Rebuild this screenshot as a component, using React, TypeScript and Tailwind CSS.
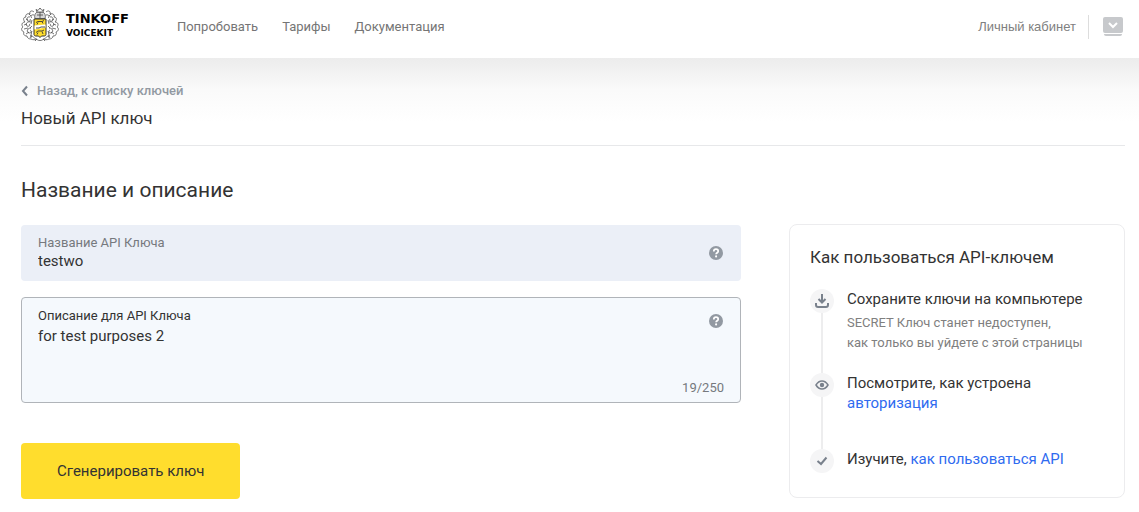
import { useState } from "react";
import type { ReactNode } from "react";

const NAV = [
  { label: "Попробовать", href: "#try" },
  { label: "Тарифы", href: "#pricing" },
  { label: "Документация", href: "#docs" },
];

const MAX_DESCRIPTION = 250;

function Crest() {
  return (
    <svg width="38" height="34" viewBox="0 0 38 34" fill="none" aria-hidden="true">
      {/* mantling */}
      <g stroke="#3c3c3c" strokeWidth=".7">
        <path d="M13 4c-2-2-5-1-4 2-3-1-5 1-4 3-3 0-3 3-1 5-3 0-4 3-2 5-2 1-2 4 1 5-1 2 0 4 3 4 0 2 2 3 4 3 2 1 4 1 6 0" />
        <path d="M25 4c2-2 5-1 4 2 3-1 5 1 4 3 3 0 3 3 1 5 3 0 4 3 2 5 2 1 2 4-1 5 1 2 0 4-3 4 0 2-2 3-4 3-2 1-4 1-6 0" />
        <path d="M13 7c-3-1-4 2-2 3M9 9c-3-1-4 3-2 4 2 1 3-1 2-2M10 14c-4-1-6 2-4 4 2 1 4-1 2-2M10 20c-4 0-5 4-2 5 2 0 3-2 1-3M11 26c-2 0-2 3 0 3M5 11l2 1M3 17l3-1M3 21l4-1M5 26l3-2M8 6l2 2M9 30l2-3M11 12l-1 4M11 18l-2 2M11 23l-1 3" />
        <path d="M25 7c3-1 4 2 2 3M29 9c3-1 4 3 2 4-2 1-3-1-2-2M28 14c4-1 6 2 4 4-2 1-4-1-2-2M28 20c4 0 5 4 2 5-2 0-3-2-1-3M27 26c2 0 2 3 0 3M33 11l-2 1M35 17l-3-1M35 21l-4-1M33 26l-3-2M30 6l-2 2M29 30l-2-3M27 12l1 4M27 18l2 2M27 23l1 3" />
      </g>
      {/* crown and helmet */}
      <path d="M14 10.500c-1-3 0-5 2-6.500h6c2 1.500 3 3.500 2 6.500z" fill="#d8d8d8" stroke="#555555" strokeWidth=".8" />
      <path d="M16 4l-1-2.500 2 1 2-2.500 2 2.500 2-1-1 2.500zM19 4v6M16 7h6" stroke="#444444" strokeWidth=".8" fill="#ffffff" />
      {/* shield */}
      <path d="M13 11h12v15.500c0 1-1 1.500-2 1.500h-2.500L19 29.500 17.500 28H15c-1 0-2-.5-2-1.500z" fill="#ffdd2d" stroke="#333333" />
      <path d="M13.500 17.500l11-1v3l-11 2z" fill="#ffffff" />
      <path d="M15 14.500l2-1h4l2-1M16 16.500l1-2M22 15.500l-1-2M15 20h3l2-1h4M15 24.500l2-1.500h4l2-1M16 26.500l1-2M22 26l-1-2.500" stroke="#3a3a3a" strokeWidth=".9" />
      {/* ribbon */}
      <path d="M10 28c2 0 3 2 5 3s2 1.500 4 1.500 2-.5 4-1.500 3-3 5-3M14 33l2-2M24 33l-2-2" stroke="#555555" strokeWidth=".8" />
    </svg>
  );
}

function HelpIcon({ className }: { className: string }) {
  return (
    <button type="button" aria-label="Подсказка" className={className}>
      <svg width="16" height="16" viewBox="0 0 16 16" fill="none">
        <circle cx="8" cy="8" r="7" fill="#9299a2" />
        <path d="M5.800 6.400c0-1.300.9-2.200 2.200-2.200s2.200.8 2.200 2c0 1.500-2.100 1.500-2.100 3.100" stroke="#fff" strokeWidth="1.700" />
        <circle cx="8.100" cy="11.400" r="1.050" fill="#fff" />
      </svg>
    </button>
  );
}

function Step({ icon, last, children }: { icon: ReactNode; last?: boolean; children: ReactNode }) {
  return (
    <li className="flex gap-[13px]">
      <div className="flex w-6 flex-col items-center">
        <span className="flex size-6 shrink-0 items-center justify-center rounded-full bg-[#f5f5f6] text-[#79818c]">
          {icon}
        </span>
        {!last && <span className="w-0.5 grow bg-[#ededee]" />}
      </div>
      <div>{children}</div>
    </li>
  );
}

export default function App() {
  const [name, setName] = useState("testwo");
  const [description, setDescription] = useState("for test purposes 2");

  return (
    <div className="bg-white font-['Roboto','Liberation_Sans',sans-serif] text-[#333333]">
      <header className="flex h-[58px] items-center justify-between pb-1 pl-[21px] pr-4">
        <div className="flex items-center">
          <a href="#home" className="flex items-center gap-[7px] pb-1 font-['DejaVu_Sans',sans-serif] font-bold text-black">
            <Crest />
            <span className="flex flex-col">
              <span className="text-[13px] leading-4">TINKOFF</span>
              <span className="text-[9px] leading-3">VOICEKIT</span>
            </span>
          </a>
          <nav className="ml-12 flex gap-6 text-[13px] leading-5 text-[#757575]">
            {NAV.map((item) => (
              <a key={item.label} href={item.href}>
                {item.label}
              </a>
            ))}
          </nav>
        </div>
        <div className="flex items-center">
          <a href="#account" className="font-['Liberation_Sans',sans-serif] text-[13px] leading-5 text-[#808080]">
            Личный кабинет
          </a>
          <span className="ml-3 h-6 w-px bg-[#dddddd]" />
          <button type="button" aria-label="Меню" className="ml-[14px]">
            <svg width="20" height="20" viewBox="0 0 20 20" fill="none">
              <rect width="20" height="16" rx="2" fill="#c7c9cc" />
              <path d="M1 17h18c0 1.300-.7 2-2 2H3c-1.300 0-2-.7-2-2z" fill="#c7c9cc" />
              <path d="M6 6l4 4 4-4" stroke="#fff" strokeWidth="2" />
            </svg>
          </button>
        </div>
      </header>

      <main className="bg-linear-to-b from-[#ececec] via-[#fafafa] via-[32px] to-white to-[64px] pb-3 pl-[21px] pr-[14px] pt-[22px]">
        <a href="#keys" className="inline-flex items-center gap-2 text-[13px] font-medium leading-5 text-[#9299a2]">
          <svg width="8" height="12" viewBox="0 0 8 12" fill="none" aria-hidden="true">
            <path d="M6 1.500L2 6l4 4.500" stroke="#79818c" strokeWidth="2" />
          </svg>
          Назад, к списку ключей
        </a>
        <h1 className="mt-0.5 border-b border-[#e7e8ea] pb-[15px] text-[17px] leading-6">Новый API ключ</h1>

        <h2 className="mt-7 text-[21px] leading-8">Название и описание</h2>

        <div className="mt-[18px] flex items-start gap-12">
          <form className="grow pt-px" onSubmit={(e) => e.preventDefault()}>
            <div className="relative h-14 rounded bg-[#ebeff7] px-[17px] pt-2">
              <label htmlFor="key-name" className="block text-[13px] leading-5 text-[#76797e]">
                Название API Ключа
              </label>
              <input
                id="key-name"
                value={name}
                onChange={(e) => setName(e.target.value)}
                className="block w-11/12 bg-transparent text-[15px] leading-4 outline-none"
              />
              <HelpIcon className="absolute right-[17px] top-5" />
            </div>

            <div className="relative mt-4 rounded border border-[#b0b4b9] bg-[#f5f9fd] px-4 pb-1 pt-2">
              <label htmlFor="key-description" className="block text-[13px] leading-5">
                Описание для API Ключа
              </label>
              <textarea
                id="key-description"
                value={description}
                maxLength={MAX_DESCRIPTION}
                onChange={(e) => setDescription(e.target.value)}
                className="block h-[52px] w-11/12 resize-none bg-transparent text-[15px] leading-5 outline-none"
              />
              <div className="text-right text-[13px] leading-5 text-[#76797e]">
                {description.length}/{MAX_DESCRIPTION}
              </div>
              <HelpIcon className="absolute right-4 top-[15px]" />
            </div>

            <button type="submit" className="mt-10 h-14 rounded bg-[#ffdd2d] px-9 text-[15px] leading-6">
              Сгенерировать ключ
            </button>
          </form>

          <aside className="w-[336px] shrink-0 rounded-lg border border-[#ececee] px-5 pb-6 pt-5">
            <h3 className="text-[17px] leading-6">Как пользоваться API-ключем</h3>
            <ol className="mt-5 text-[15px] leading-5">
              <Step
                icon={
                  <svg width="14" height="14" viewBox="0 0 14 14" fill="none" stroke="currentColor" strokeWidth="2">
                    <path d="M7 0v8M3.500 5L7 8.500 10.500 5M1 9v2c0 1 .5 2 2 2h8c1.500 0 2-1 2-2V9" />
                  </svg>
                }
              >
                <p>Сохраните ключи на компьютере</p>
                <p className="mt-1 pb-5 text-[13px] leading-5 text-[#808080]">
                  SECRET Ключ станет недоступен,
                  <br />
                  как только вы уйдете с этой страницы
                </p>
              </Step>
              <Step
                icon={
                  <svg width="14" height="10" viewBox="0 0 14 10" fill="none">
                    <path d="M1 5c1.500-2.500 3.500-4 6-4s4.500 1.500 6 4c-1.500 2.500-3.500 4-6 4S2.500 7.500 1 5z" stroke="currentColor" strokeWidth="1.500" />
                    <circle cx="7" cy="5" r="2.200" fill="currentColor" />
                  </svg>
                }
              >
                <p className="pb-9">
                  Посмотрите, как устроена
                  <br />
                  <a href="#auth" className="text-[#2f6bf0]">
                    авторизация
                  </a>
                </p>
              </Step>
              <Step
                last
                icon={
                  <svg width="12" height="10" viewBox="0 0 12 10" fill="none">
                    <path d="M1.500 5L5 8l5.500-6.500" stroke="currentColor" strokeWidth="2" />
                  </svg>
                }
              >
                <p>
                  Изучите,{" "}
                  <a href="#usage" className="text-[#2f6bf0]">
                    как пользоваться API
                  </a>
                </p>
              </Step>
            </ol>
          </aside>
        </div>
      </main>
    </div>
  );
}
